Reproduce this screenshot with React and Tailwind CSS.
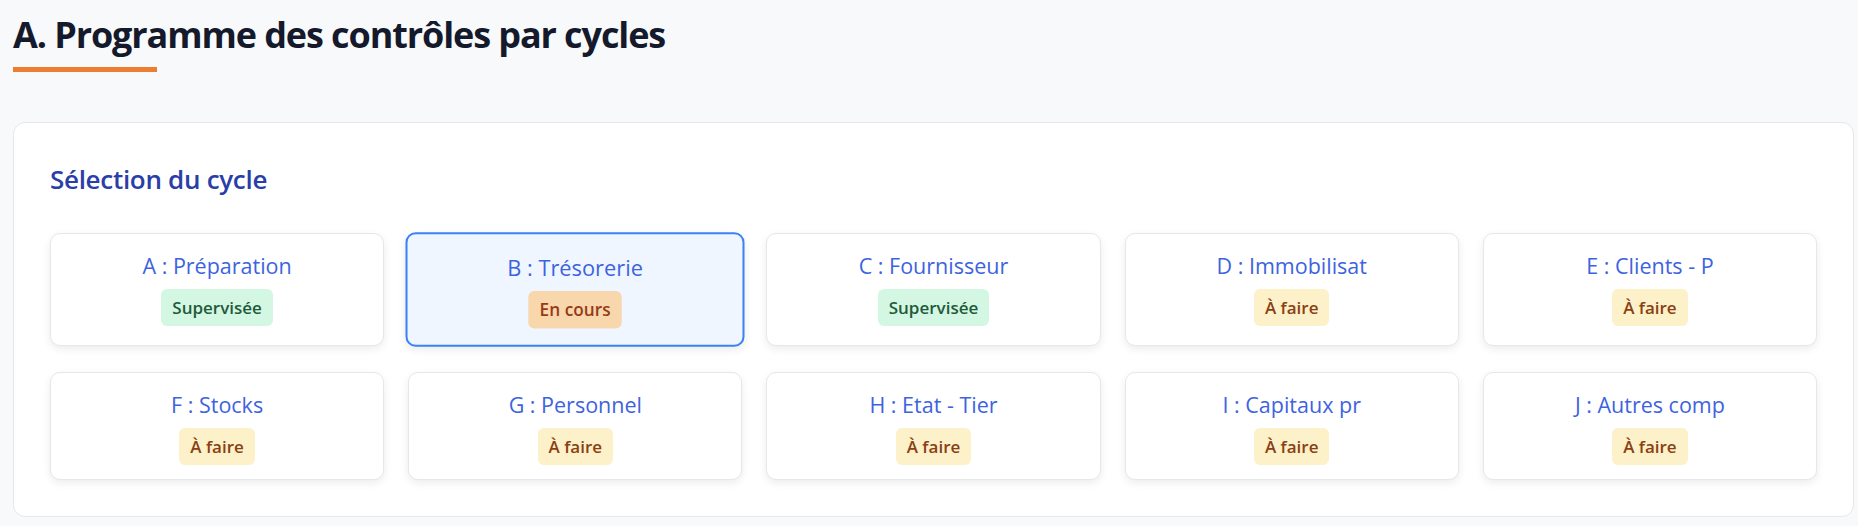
const cycles = [
  { code: 'A', label: 'Préparation', status: 'done' },
  { code: 'B', label: 'Trésorerie', status: 'progress' },
  { code: 'C', label: 'Fournisseur', status: 'done' },
  { code: 'D', label: 'Immobilisat', status: 'todo' },
  { code: 'E', label: 'Clients - P', status: 'todo' },
  { code: 'F', label: 'Stocks', status: 'todo' },
  { code: 'G', label: 'Personnel', status: 'todo' },
  { code: 'H', label: 'Etat - Tier', status: 'todo' },
  { code: 'I', label: 'Capitaux pr', status: 'todo' },
  { code: 'J', label: 'Autres comp', status: 'todo' },
]

const badgeStyles = {
  done: { text: 'Supervisée', className: 'bg-[#d4f7e3] text-[#1f5a3a]' },
  progress: { text: 'En cours', className: 'bg-[#f8d7ad] text-[#973b17]' },
  todo: { text: 'À faire', className: 'bg-[#fdf1c9] text-[#8a4012]' },
}

function StatusBadge({ status }) {
  const badge = badgeStyles[status]
  return (
    <span className={`inline-flex items-center h-[37px] px-[11px] rounded-md text-[17px] font-semibold ${badge.className}`}>
      {badge.text}
    </span>
  )
}

function CycleCard({ cycle, selected }) {
  return (
    <div
      className={
        selected
          ? 'flex flex-col items-center rounded-[10px] border-2 border-[#3b82f6] bg-[#eff6ff] pt-[19px] pb-[16px] scale-[1.015] shadow-[0_3px_8px_rgba(0,0,0,0.08)]'
          : 'flex flex-col items-center rounded-[10px] border border-[#e5e7eb] bg-white pt-[18px] pb-[14px] shadow-[0_3px_8px_rgba(0,0,0,0.08)]'
      }
    >
      <div className="text-[21.5px] leading-[28px] font-medium text-[#3d63e0]">
        {cycle.code} : {cycle.label}
      </div>
      <div className="mt-[9px]">
        <StatusBadge status={cycle.status} />
      </div>
    </div>
  )
}

export default function App() {
  return (
    <div
      className="min-h-[526px] bg-[#f8f9fb] pl-[13px] pr-[4px] pt-[15px] pb-[8px]"
      style={{ fontFamily: '"Open Sans", "Noto Sans", sans-serif' }}
    >
      <h1 className="text-[36px] leading-[40px] font-bold text-[#141a2b] tracking-[-1.1px]">
        A. Programme des contrôles par cycles
      </h1>
      <div className="mt-3 h-[5px] w-[144px] bg-[#ed7d31]" />

      <div className="mt-[50px] rounded-xl border border-[#e5e7eb] bg-white px-9 pt-[40px] pb-[36px]">
        <h2 className="text-[26px] leading-[32px] font-semibold text-[#2a3ea8] tracking-[-0.3px]">
          Sélection du cycle
        </h2>
        <div className="mt-[38px] grid grid-cols-5 gap-x-6 gap-y-[26px]">
          {cycles.map((cycle) => (
            <CycleCard key={cycle.code} cycle={cycle} selected={cycle.code === 'B'} />
          ))}
        </div>
      </div>
    </div>
  )
}
